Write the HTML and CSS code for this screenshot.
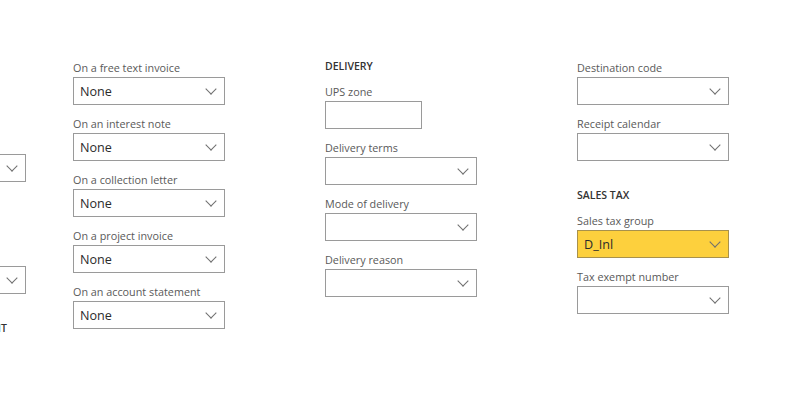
FILE: index.html
```html
<!DOCTYPE html>
<html lang="en">
  <head>
    <meta charset="utf-8">
    <title>Invoice and delivery</title>
    <link rel="stylesheet" href="styles.css">
  </head>
  <body>
    <div class="tab clearfix">

      <div class="group first">
        <div class="field">
          <label>Invoice</label>
          <div class="combo"><span></span><i class="chev"></i></div>
        </div>
        <div class="spacer"></div>
        <div class="field">
          <label>Mode</label>
          <div class="combo"><span></span><i class="chev"></i></div>
        </div>
        <h3 class="heading cut">DEFAULT ACCOUNT</h3>
      </div>

      <div class="group">
        <div class="field">
          <label>On a free text invoice</label>
          <div class="combo"><span>None</span><i class="chev"></i></div>
        </div>
        <div class="field">
          <label>On an interest note</label>
          <div class="combo"><span>None</span><i class="chev"></i></div>
        </div>
        <div class="field">
          <label>On a collection letter</label>
          <div class="combo"><span>None</span><i class="chev"></i></div>
        </div>
        <div class="field">
          <label>On a project invoice</label>
          <div class="combo"><span>None</span><i class="chev"></i></div>
        </div>
        <div class="field">
          <label>On an account statement</label>
          <div class="combo"><span>None</span><i class="chev"></i></div>
        </div>
      </div>

      <div class="group">
        <h3 class="heading top">DELIVERY</h3>
        <div class="field">
          <label>UPS zone</label>
          <div class="text short"></div>
        </div>
        <div class="field">
          <label>Delivery terms</label>
          <div class="combo"><span></span><i class="chev"></i></div>
        </div>
        <div class="field">
          <label>Mode of delivery</label>
          <div class="combo"><span></span><i class="chev"></i></div>
        </div>
        <div class="field">
          <label>Delivery reason</label>
          <div class="combo"><span></span><i class="chev"></i></div>
        </div>
      </div>

      <div class="group">
        <div class="field">
          <label>Destination code</label>
          <div class="combo"><span></span><i class="chev"></i></div>
        </div>
        <div class="field">
          <label>Receipt calendar</label>
          <div class="combo"><span></span><i class="chev"></i></div>
        </div>
        <h3 class="heading">SALES TAX</h3>
        <div class="field">
          <label>Sales tax group</label>
          <div class="combo changed"><span>D_Inl</span><i class="chev"></i></div>
        </div>
        <div class="field">
          <label>Tax exempt number</label>
          <div class="combo"><span></span><i class="chev"></i></div>
        </div>
      </div>

    </div>
  </body>
</html>
```

FILE: styles.css
```css
body {
  margin: 0;
  background: #FFFFFF;
  font-family: "Segoe UI", "Open Sans", sans-serif;
  color: #333333;
  overflow: hidden;
}

.tab {
  display: flex;
  padding-top: 57px;
}

.group {
  width: 152px;
  flex-shrink: 0;
  margin-right: 100px;
}

.group.first {
  margin-left: -126px;
  margin-right: 47px;
  padding-top: 77px;
}

.field {
  margin-bottom: 8px;
}

.field label {
  display: block;
  box-sizing: border-box;
  height: 20px;
  padding-top: 2px;
  line-height: 18px;
  font-size: 10.8px;
  color: #595959;
  white-space: nowrap;
}

.spacer {
  height: 56px;
}

.combo,
.text {
  box-sizing: border-box;
  height: 28px;
  border: 1px solid #9a9a9a;
  background: #FFFFFF;
}

.combo {
  display: flex;
  align-items: center;
  justify-content: space-between;
  padding: 0 9px 0 6px;
}

.combo span {
  font-size: 12.6px;
  color: #2b2b2b;
}

.combo.changed {
  background: #FDD03D;
  border-color: #a8914c;
}

.text.short {
  width: 97px;
}

.chev {
  width: 7px;
  height: 7px;
  margin-top: -5px;
  border-right: 1px solid #6f6f6f;
  border-bottom: 1px solid #6f6f6f;
  transform: rotate(45deg);
}

.heading {
  margin: 25px 0 0 0;
  height: 24px;
  line-height: 18px;
  font-size: 10.5px;
  font-weight: 600;
  color: #333333;
  white-space: nowrap;
}

.heading.top {
  margin-top: 0;
}

.heading.cut {
  text-align: right;
  padding-right: 19px;
}
```
